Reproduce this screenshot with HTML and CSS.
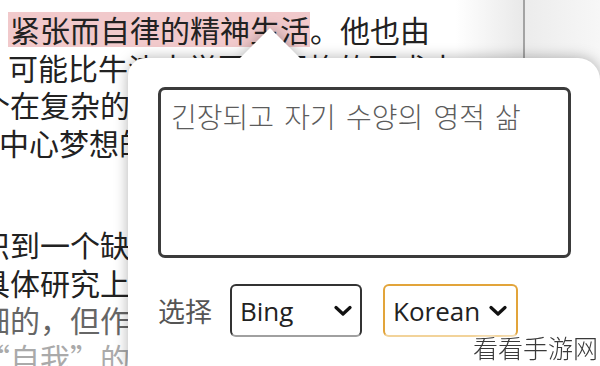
FILE: index.html
```html
<!DOCTYPE html>
<html lang="zh">
  <head>
    <meta charset="UTF-8" />
    <meta name="viewport" content="width=device-width, initial-scale=1.0" />
    <title>翻译</title>
    <link rel="stylesheet" href="styles.css">
  </head>
  <body>
    <main class="page">
      <div class="article">
        <div class="para">
          <p class="line first"><span class="mark">紧张而自律的精神生活</span>。他也由</p>
          <p class="line first">可能比牛津大学更加严格的要求中</p>
          <p class="line cut">个在复杂的世界里坚守自我的人</p>
          <p class="line cut-sm">中心梦想的追求与现实的</p>
        </div>
        <div class="para">
          <p class="line cut">识到一个缺少了信念的生活</p>
          <p class="line cut">具体研究上的细节固然重要</p>
          <p class="line cut fade1">细的，但作为一个完整的人</p>
          <p class="line cut fade2">“自我”的意义更加深远</p>
        </div>
      </div>
      <div class="sidebar"></div>
    </main>

    <div class="popup">
      <textarea class="output" spellcheck="false">긴장되고 자기 수양의 영적 삶</textarea>
      <div class="controls">
        <span class="label">选择</span>
        <div class="select">
          <span>Bing</span>
          <svg class="chev" viewBox="0 0 18 12"><path d="M2 2.5 L9 9 L16 2.5" /></svg>
        </div>
        <div class="select active">
          <span>Korean</span>
          <svg class="chev" viewBox="0 0 18 12"><path d="M2 2.5 L9 9 L16 2.5" /></svg>
        </div>
      </div>
    </div>

    <div class="watermark">看看手游网</div>
  </body>
</html>
```

FILE: styles.css
```css
* {
  margin: 0;
  padding: 0;
  box-sizing: border-box;
}

body {
  width: 600px;
  height: 366px;
  overflow: hidden;
  position: relative;
  background: #fff;
  font-family: "Noto Sans CJK SC", sans-serif;
}

.page {
  display: flex;
  height: 100%;
}

.article {
  width: 523px;
  flex: none;
  overflow: hidden;
  padding-top: 11px;
  background: linear-gradient(to right, #fff 0, #fff 455px, #e9e9e9 523px);
}

.para + .para {
  margin-top: 65px;
}

.line {
  white-space: nowrap;
  font-size: 30px;
  line-height: 37.5px;
  color: #222;
}

.line.first {
  padding-left: 8px;
}

.line.cut {
  margin-left: -20px;
}

.line.cut-sm {
  margin-left: -1px;
}

.line.fade1 {
  color: #666;
}

.line.fade2 {
  color: #aaa;
}

.mark {
  display: inline-block;
  vertical-align: top;
  margin-top: 1px;
  line-height: 35px;
  padding-left: 2px;
  background: #f1c9cb;
}

.sidebar {
  flex: 1;
  border-left: 2px solid #a3a3a3;
  background: linear-gradient(to right, #ececec, #f7f7f7);
}

/* translate popup */
.popup {
  position: absolute;
  left: 128px;
  top: 58px;
  bottom: 0;
  width: 472px;
  padding: 29px 29px 0 30px;
  background: #fff;
  border-radius: 18px 22px 0 0;
  filter: drop-shadow(0 0 7px rgba(0, 0, 0, 0.3));
}

.popup::before {
  content: "";
  position: absolute;
  left: 112px;
  top: -30px;
  width: 0;
  height: 0;
  border-left: 30px solid transparent;
  border-right: 30px solid transparent;
  border-bottom: 30px solid #fff;
}

.output {
  display: block;
  width: 413px;
  height: 171px;
  padding: 7px 10px;
  border: 3px solid #3b3b3b;
  border-radius: 7px;
  resize: none;
  outline: none;
  font-family: "Noto Sans CJK KR", sans-serif;
  font-size: 28px;
  font-weight: 300;
  line-height: 1.4;
  word-spacing: 4px;
  color: #5c5c5c;
}

.controls {
  display: flex;
  align-items: center;
  margin-top: 26px;
}

.label {
  font-size: 27px;
  color: #555;
  margin-right: 18px;
}

.select {
  display: flex;
  align-items: center;
  justify-content: space-between;
  width: 132px;
  height: 53px;
  padding: 0 8px;
  border: 2.5px solid #333;
  border-bottom-color: #a0a0a0;
  border-radius: 6px;
  font-family: "Open Sans", sans-serif;
  font-size: 26px;
  color: #222;
}

.select + .select {
  margin-left: 21px;
  width: 135px;
  padding-right: 9px;
}

.select.active {
  border-color: #e2a43a;
  border-bottom-color: #f2d39a;
}

.chev {
  width: 18px;
  height: 12px;
}

.chev path {
  fill: none;
  stroke: #111;
  stroke-width: 3.2;
  stroke-linecap: round;
  stroke-linejoin: round;
}

.watermark {
  position: absolute;
  right: 2px;
  bottom: 1px;
  font-size: 25px;
  font-weight: 300;
  color: #3a3a3a;
  text-shadow: 0 0 3px #fff, 0 0 3px #fff, 0 0 6px #fff;
}
```
